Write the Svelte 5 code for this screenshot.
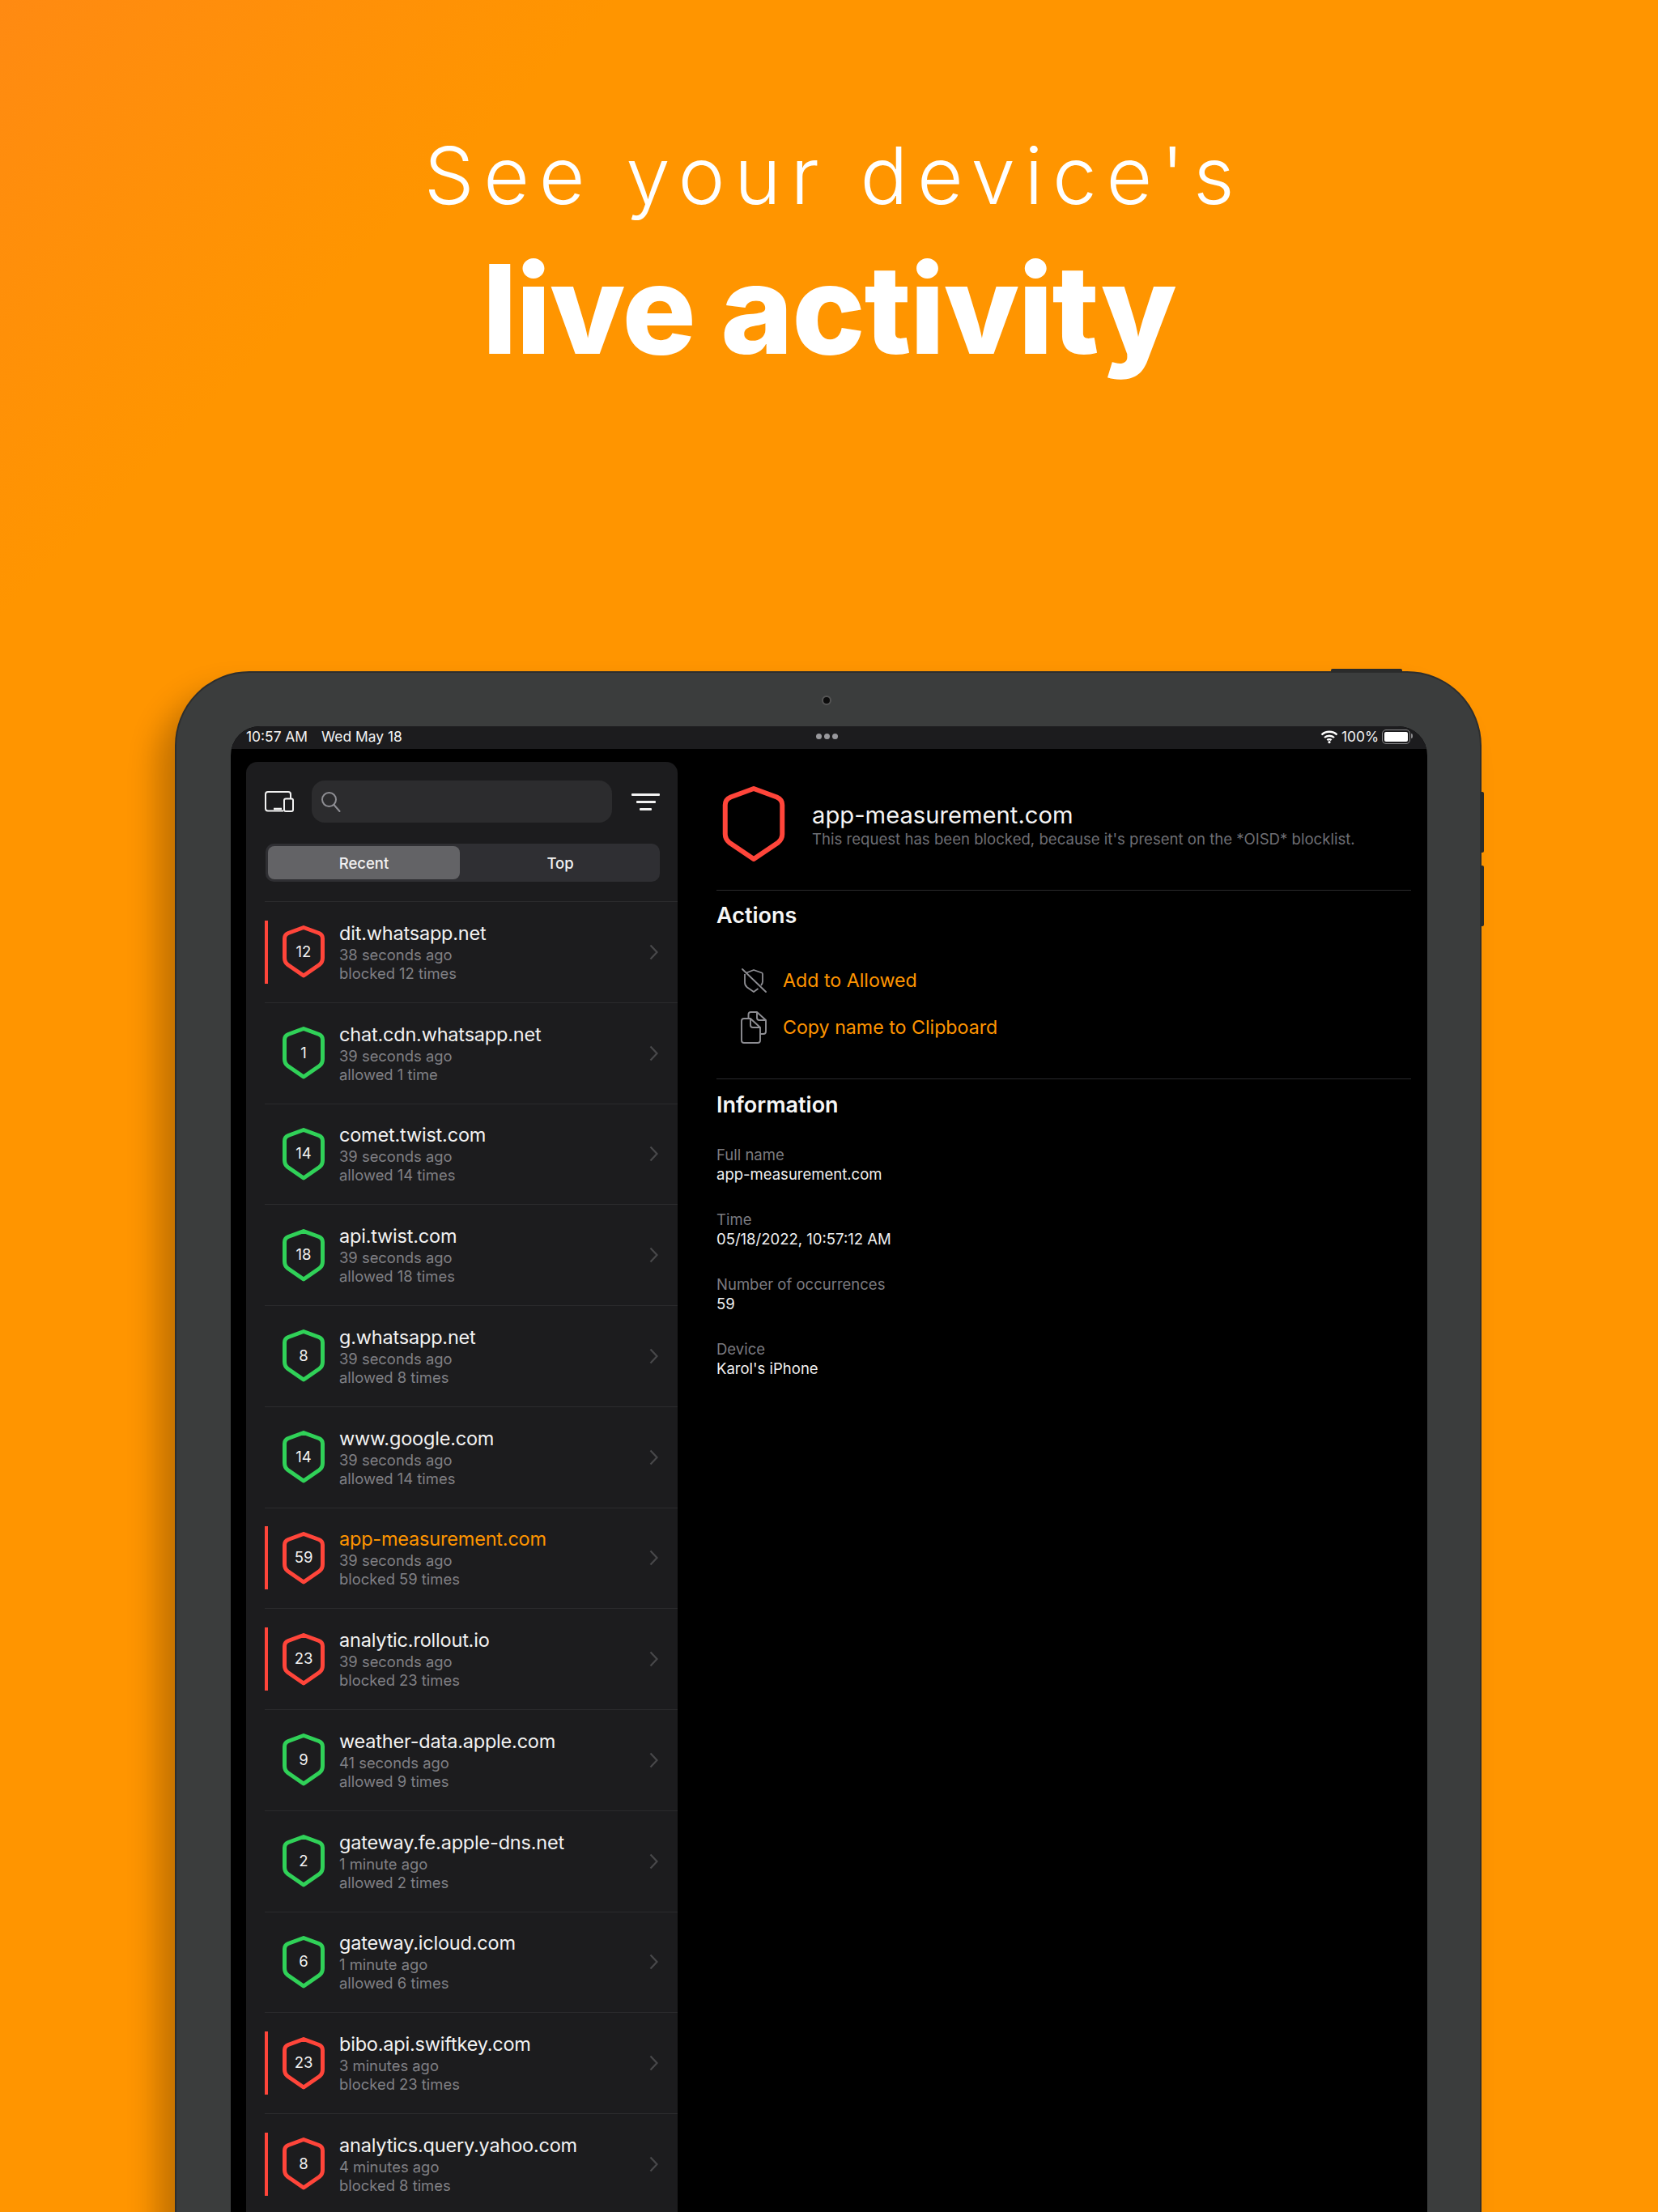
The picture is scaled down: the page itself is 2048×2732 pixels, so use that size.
<script>
	const rows = [
		{ name: 'dit.whatsapp.net', ago: '38 seconds ago', n: 12, blocked: true },
		{ name: 'chat.cdn.whatsapp.net', ago: '39 seconds ago', n: 1, blocked: false },
		{ name: 'comet.twist.com', ago: '39 seconds ago', n: 14, blocked: false },
		{ name: 'api.twist.com', ago: '39 seconds ago', n: 18, blocked: false },
		{ name: 'g.whatsapp.net', ago: '39 seconds ago', n: 8, blocked: false },
		{ name: 'www.google.com', ago: '39 seconds ago', n: 14, blocked: false },
		{ name: 'app-measurement.com', ago: '39 seconds ago', n: 59, blocked: true, active: true },
		{ name: 'analytic.rollout.io', ago: '39 seconds ago', n: 23, blocked: true },
		{ name: 'weather-data.apple.com', ago: '41 seconds ago', n: 9, blocked: false },
		{ name: 'gateway.fe.apple-dns.net', ago: '1 minute ago', n: 2, blocked: false },
		{ name: 'gateway.icloud.com', ago: '1 minute ago', n: 6, blocked: false },
		{ name: 'bibo.api.swiftkey.com', ago: '3 minutes ago', n: 23, blocked: true },
		{ name: 'analytics.query.yahoo.com', ago: '4 minutes ago', n: 8, blocked: true }
	];

	const info = [
		{ label: 'Full name', value: 'app-measurement.com' },
		{ label: 'Time', value: '05/18/2022, 10:57:12 AM' },
		{ label: 'Number of occurrences', value: '59' },
		{ label: 'Device', value: "Karol's iPhone" }
	];

	const shieldPath = 'M26 2.5 L45 9.5 Q49.5 11.5 49.5 16 V40 Q49.5 45.5 45.5 48.5 L26 62 L6.5 48.5 Q2.5 45.5 2.5 40 V16 Q2.5 11.5 7 9.5 Z';
</script>

<main class="page">
	<header class="headline">
		<p class="headline__light">See your device's</p>
		<h1 class="headline__bold">live activity</h1>
	</header>

	<div class="device">
		<span class="device__btn device__btn--top"></span>
		<span class="device__btn device__btn--vol1"></span>
		<span class="device__btn device__btn--vol2"></span>
		<span class="device__camera"></span>

		<div class="screen">
			<div class="status">
				<div class="status__left"><span>10:57 AM</span><span>Wed May 18</span></div>
				<div class="status__dots"><i></i><i></i><i></i></div>
				<div class="status__right">
					<svg width="22" height="18" viewBox="0 0 22 18" fill="none" stroke="#fff" stroke-width="2.4">
						<path d="M1.5 6.5 C6.5 1.5 15.5 1.5 20.5 6.5" />
						<path d="M5 10 C8 7 14 7 17 10" />
						<path d="M8.4 13.2 C9.8 11.9 12.2 11.9 13.6 13.2" />
						<circle cx="11" cy="15.6" r="1.6" fill="#fff" stroke="none" />
					</svg>
					<span>100%</span>
					<div class="battery"><div></div></div>
				</div>
			</div>

			<div class="content">
				<aside class="sidebar">
					<div class="toolbar">
						<svg class="toolbar__device" width="36" height="26" viewBox="0 0 36 26" fill="none" stroke="#f2f2f2" stroke-width="2">
							<path d="M23 24.5 H4 Q1 24.5 1 21.5 V4 Q1 1 4 1 H29 Q32 1 32 4 V9" />
							<rect x="24" y="9.5" width="11" height="15.5" rx="2" />
							<path d="M11 22 H21" stroke-width="2.5" />
						</svg>
						<div class="search">
							<svg width="26" height="26" viewBox="0 0 26 26" fill="none" stroke="#8e8e93" stroke-width="2">
								<circle cx="10.5" cy="10.5" r="8.5" />
								<path d="M16.5 17 L23.5 25" stroke-linecap="round" />
							</svg>
						</div>
						<div class="filter"><i></i><i></i><i></i></div>
					</div>

					<div class="segment">
						<div class="segment__item segment__item--on">Recent</div>
						<div class="segment__item">Top</div>
					</div>

					<ul class="list">
						{#each rows as row}
							<li class="row">
								<span class="row__bar" class:row__bar--on={row.blocked}></span>
								<div class="row__shield">
									<svg width="52" height="65" viewBox="0 0 52 65" fill="none">
										<path d={shieldPath} stroke={row.blocked ? '#ff453a' : '#30d158'} stroke-width="5" stroke-linejoin="round" />
									</svg>
									<span>{row.n}</span>
								</div>
								<div class="row__text">
									<div class="row__name" class:row__name--active={row.active}>{row.name}</div>
									<div class="row__sub">{row.ago}</div>
									<div class="row__sub">{row.blocked ? 'blocked' : 'allowed'} {row.n} {row.n === 1 ? 'time' : 'times'}</div>
								</div>
								<svg class="row__chevron" width="11" height="20" viewBox="0 0 11 20" fill="none" stroke="#48484a" stroke-width="2.2">
									<path d="M1.5 1.5 L9.5 10 L1.5 18.5" />
								</svg>
							</li>
						{/each}
					</ul>
				</aside>

				<section class="detail">
					<div class="hero">
						<svg class="hero__shield" width="78" height="93" viewBox="0 0 52 62" fill="none">
							<path d="M26 2 L45 9 Q49.5 11 49.5 15.5 V39.5 Q49.5 43.5 46 46.5 L26 60 L6 46.5 Q2.5 43.5 2.5 39.5 V15.5 Q2.5 11 7 9 Z" stroke="#ff453a" stroke-width="4" stroke-linejoin="round" />
						</svg>
						<div>
							<div class="hero__title">app-measurement.com</div>
							<div class="hero__sub">This request has been blocked, because it's present on the *OISD* blocklist.</div>
						</div>
					</div>

					<div class="actions">
						<h2>Actions</h2>
						<div class="action action--first">
							<svg width="32" height="32" viewBox="0 0 32 32" fill="none" stroke="#8e8e93" stroke-width="1.8" stroke-linejoin="round">
								<path d="M7 6.5 L16 3 L26 6.5 Q27 7 27 8 V17 Q27 20 25 22 M21.5 26 L16 30 L8 24.5 Q5 22 5 18.5 V8" />
								<path d="M2 2 L31 30" stroke-linecap="round" />
							</svg>
							<span>Add to Allowed</span>
						</div>
						<div class="action">
							<svg width="32" height="40" viewBox="0 0 32 40" fill="none" stroke="#8e8e93" stroke-width="1.9" stroke-linejoin="round">
								<path d="M9.5 8 V4 Q9.5 1 12.5 1 H20 L31 11 V25 Q31 28 28 28 H24" />
								<path d="M20 1 V8 Q20 11 23 11 H31" />
								<path d="M1 12 Q1 9 4 9 H12 L24 20 V36 Q24 39 21 39 H4 Q1 39 1 36 Z" />
								<path d="M12 9 V17 Q12 20 15 20 H24" />
							</svg>
							<span>Copy name to Clipboard</span>
						</div>
					</div>

					<div class="info">
						<h2>Information</h2>
						<dl>
							{#each info as item}
								<div class="info__item">
									<dt>{item.label}</dt>
									<dd>{item.value}</dd>
								</div>
							{/each}
						</dl>
					</div>
				</section>
			</div>
		</div>
	</div>
</main>

<style>
	:global(body) {
		margin: 0;
		background: #ff9500;
	}

	.page {
		width: 2048px;
		height: 2732px;
		overflow: hidden;
		background: linear-gradient(135deg, #ff8a12 0%, #ff9500 16%);
		font-family: Inter, 'Liberation Sans', sans-serif;
	}

	.headline {
		text-align: center;
		color: #fff;
		font-family: Inter, 'Open Sans', sans-serif;
		padding-top: 157px;
	}

	.headline__light {
		margin: 0;
		padding-left: 12px;
		font-size: 98px;
		line-height: 120px;
		font-weight: 300;
		letter-spacing: 11.6px;
	}

	.headline__bold {
		margin: 20px 0 0;
		font-size: 152px;
		line-height: 170px;
		font-weight: 800;
		letter-spacing: -1.4px;
	}

	.device {
		position: relative;
		box-sizing: border-box;
		width: 1614px;
		height: 2000px;
		margin: 362px 0 0 216px;
		padding: 66px 65px 0 67px;
		background: #3b3d3d;
		border: 2px solid #2d2e2e;
		border-radius: 92px 92px 0 0;
		box-shadow: -22px 24px 36px rgba(0, 0, 0, 0.24);
	}

	.device__btn {
		position: absolute;
		background: #2a2b2b;
	}

	.device__btn--top {
		top: -5px;
		left: 1426px;
		width: 88px;
		height: 4px;
		border-radius: 2px 2px 0 0;
	}

	.device__btn--vol1,
	.device__btn--vol2 {
		right: -5px;
		width: 4px;
		height: 75px;
		border-radius: 0 2px 2px 0;
	}

	.device__btn--vol1 {
		top: 147px;
	}

	.device__btn--vol2 {
		top: 238px;
	}

	.device__camera {
		position: absolute;
		top: 28px;
		left: 797px;
		width: 8px;
		height: 8px;
		border-radius: 50%;
		background: #0c0c0c;
		border: 2px solid #555;
	}

	.screen {
		width: 1478px;
		background: #000;
		border-radius: 36px 36px 0 0;
		overflow: hidden;
		color: #fff;
		height: 1950px;
	}

	.status {
		position: relative;
		display: flex;
		align-items: center;
		justify-content: space-between;
		box-sizing: border-box;
		height: 28px;
		padding: 0 19px 3px 19px;
		background: #1c1c1e;
		font-size: 17.4px;
		color: #f4f4f4;
	}

	.status__left {
		display: flex;
		gap: 17px;
	}

	.status__dots {
		position: absolute;
		left: 723px;
		display: flex;
		gap: 3px;
	}

	.status__dots i {
		width: 7px;
		height: 7px;
		border-radius: 50%;
		background: #98989c;
	}

	.status__right {
		display: flex;
		align-items: center;
		gap: 4px;
	}

	.battery {
		position: relative;
		box-sizing: border-box;
		width: 35px;
		height: 18px;
		padding: 2px;
		border: 1.5px solid #8a8a8c;
		border-radius: 5px;
		margin-right: 2px;
	}

	.battery::after {
		content: '';
		position: absolute;
		top: 4px;
		right: -4px;
		width: 2px;
		height: 6px;
		background: #8a8a8c;
		border-radius: 0 2px 2px 0;
	}

	.battery div {
		width: 100%;
		height: 100%;
		background: #fff;
		border-radius: 2px;
	}

	.content {
		display: flex;
		align-items: stretch;
		height: 1922px;
		box-sizing: border-box;
		padding: 16px 0 0 19px;
	}

	.sidebar {
		width: 533px;
		flex: none;
		box-sizing: border-box;
		background: #1c1c1e;
		border-radius: 14px 14px 0 0;
		padding-top: 23px;
	}

	.toolbar {
		display: flex;
		align-items: center;
		height: 52px;
		padding: 0 22px 0 23px;
	}

	.toolbar__device {
		flex: none;
		margin-right: 22px;
	}

	.search {
		display: flex;
		align-items: center;
		width: 371px;
		height: 52px;
		padding-left: 11px;
		box-sizing: border-box;
		background: #2c2c2e;
		border-radius: 16px;
	}

	.filter {
		display: flex;
		flex-direction: column;
		align-items: center;
		gap: 6px;
		margin-left: 24px;
		width: 35px;
	}

	.filter i {
		height: 3px;
		border-radius: 1px;
		background: #f2f2f2;
		width: 35px;
	}

	.filter i:nth-child(2) {
		width: 24px;
	}

	.filter i:nth-child(3) {
		width: 15px;
	}

	.segment {
		display: flex;
		box-sizing: border-box;
		margin: 26px 22px 24px 24px;
		height: 47px;
		padding: 3px;
		background: #2f2f33;
		border-radius: 10px;
		font-size: 18.5px;
		font-weight: 500;
	}

	.segment__item {
		display: flex;
		align-items: center;
		justify-content: center;
		flex: 1;
		padding-left: 4px;
		color: #f2f2f2;
	}

	.segment__item--on {
		flex: none;
		width: 237px;
		padding-left: 0;
		background: #636366;
		border-radius: 8px;
	}

	.list {
		list-style: none;
		margin: 0;
		padding: 0 0 0 23px;
	}

	.row {
		display: flex;
		align-items: center;
		box-sizing: border-box;
		height: 124.75px;
		border-top: 1.5px solid #2b2b2d;
		padding-right: 24px;
	}

	.row__bar {
		flex: none;
		width: 4px;
		height: 78px;
		margin-right: 18px;
	}

	.row__bar--on {
		background: #ff453a;
	}

	.row__shield {
		position: relative;
		flex: none;
		display: flex;
		align-items: center;
		justify-content: center;
		width: 52px;
		height: 65px;
		margin-right: 18px;
	}

	.row__shield svg {
		position: absolute;
		inset: 0;
	}

	.row__shield span {
		font-size: 18.5px;
		color: #f2f2f2;
		padding-bottom: 2px;
	}

	.row__text {
		flex: 1;
	}

	.row__name {
		font-size: 23.5px;
		letter-spacing: -0.2px;
		line-height: 30px;
		color: #f2f2f2;
	}

	.row__name--active {
		color: #ff9500;
	}

	.row__sub {
		font-size: 18.4px;
		line-height: 23px;
		color: #808085;
	}

	.detail {
		flex: 1;
		padding: 30px 20px 0 48px;
	}

	.hero {
		display: flex;
		align-items: center;
		gap: 33px;
		padding: 0 0 35px 7px;
		border-bottom: 1.5px solid #2a2a2c;
	}

	.hero__title {
		font-size: 29.2px;
		line-height: 36px;
		color: #f4f4f4;
	}

	.hero__sub {
		font-size: 18.6px;
		line-height: 22px;
		color: #6e6e73;
	}

	h2 {
		margin: 0;
		font-size: 27px;
		line-height: 34px;
		font-weight: 600;
		color: #f6f6f6;
	}

	.actions {
		padding: 14px 0 34px;
		border-bottom: 1.5px solid #2a2a2c;
	}

	.action {
		display: flex;
		align-items: center;
		height: 58px;
		padding-left: 30px;
		gap: 20px;
		font-size: 23.2px;
		color: #ff9500;
	}

	.action svg {
		flex: none;
	}

	.action--first {
		margin-top: 34px;
	}

	.info {
		padding-top: 15px;
	}

	dl {
		margin: 33px 0 0;
	}

	.info__item {
		height: 80px;
		font-size: 18.5px;
		line-height: 23.5px;
	}

	dt {
		color: #7b7b80;
	}

	dd {
		margin: 0;
		color: #f0f0f0;
	}
</style>
